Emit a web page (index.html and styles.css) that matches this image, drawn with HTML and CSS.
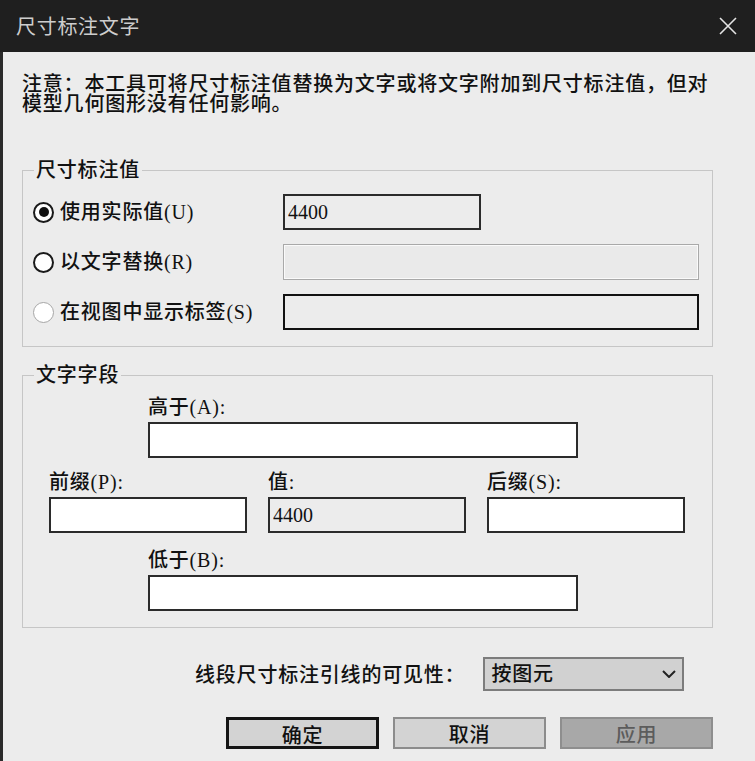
FILE: index.html
```html
<!DOCTYPE html>
<html lang="zh-CN">
<head>
  <meta charset="UTF-8">
  <meta name="viewport" content="width=device-width, initial-scale=1.0">
  <title>尺寸标注文字</title>
  <link rel="stylesheet" href="styles.css">
</head>
<body>
  <div class="dialog">
    <div class="titlebar">
      <span class="title">尺寸标注文字</span>
      <svg class="close" width="18" height="18" viewBox="0 0 18 18">
        <path d="M1 1L17 17M17 1L1 17" stroke="#e4e4e4" stroke-width="1.6" fill="none"/>
      </svg>
    </div>

    <div class="content">
      <p class="note">注意：本工具可将尺寸标注值替换为文字或将文字附加到尺寸标注值，但对模型几何图形没有任何影响。</p>

      <fieldset class="group">
        <legend>尺寸标注值</legend>
        <div class="value-rows">
          <label class="radio checked"><span class="dot"></span>使用实际值(U)</label>
          <input class="field readonly short" type="text" value="4400" readonly>
          <label class="radio"><span class="dot"></span>以文字替换(R)</label>
          <input class="field sunken long" type="text" readonly>
          <label class="radio disabled"><span class="dot"></span>在视图中显示标签(S)</label>
          <input class="field readonly dark long" type="text" readonly>
        </div>
      </fieldset>

      <fieldset class="group text-group">
        <legend>文字字段</legend>
        <div class="text-fields">
          <div class="wide above">
            <div class="lbl">高于(A):</div>
            <input class="field" type="text">
          </div>
          <div class="triple">
            <div>
              <div class="lbl">前缀(P):</div>
              <input class="field" type="text">
            </div>
            <div>
              <div class="lbl">值:</div>
              <input class="field readonly" type="text" value="4400" readonly>
            </div>
            <div>
              <div class="lbl">后缀(S):</div>
              <input class="field" type="text">
            </div>
          </div>
          <div class="wide below">
            <div class="lbl">低于(B):</div>
            <input class="field" type="text">
          </div>
        </div>
      </fieldset>

      <div class="visibility">
        <span class="vis-label">线段尺寸标注引线的可见性：</span>
        <div class="select">
          <span>按图元</span>
          <svg width="14" height="8" viewBox="0 0 14 8">
            <path d="M1 1L7 7L13 1" stroke="#222" stroke-width="2" fill="none"/>
          </svg>
        </div>
      </div>

      <div class="buttons">
        <button class="btn default">确定</button>
        <button class="btn">取消</button>
        <button class="btn disabled">应用</button>
      </div>
    </div>
  </div>
</body>
</html>
```

FILE: styles.css
```css
html, body {
  margin: 0;
  padding: 0;
  background: #ececec;
}
body {
  font-family: "Liberation Serif", "Noto Sans CJK SC", serif;
  font-size: 20px;
  font-weight: 500;
  line-height: 20px;
  letter-spacing: 0.8px;
  color: #111;
}
.dialog {
  width: 755px;
  height: 761px;
  overflow: hidden;
}
.titlebar {
  height: 52px;
  background: #1f1f1f;
  display: flex;
  align-items: center;
  justify-content: space-between;
  padding: 0 18px 0 16px;
  box-sizing: border-box;
}
.title {
  font-family: "Noto Sans CJK SC", sans-serif;
  font-weight: 400;
  color: #cdcdcd;
  font-size: 20px;
  letter-spacing: 0.7px;
}
.content {
  height: 709px;
  box-sizing: border-box;
  border-left: 3px solid #2a2a2a;
  padding: 22px 42px 0 19px;
}
.note {
  margin: 0;
  line-height: 20px;
}

/* group boxes */
.group {
  margin: 46px 0 0;
  padding: 0;
  border: 1px solid #c6c6c6;
  min-width: 0;
}
.group legend {
  margin-left: 11px;
  padding: 0 2px;
  line-height: 20px;
}
.text-group {
  margin-top: 18px;
}

.value-rows {
  display: grid;
  grid-template-columns: 250px auto;
  row-gap: 14px;
  align-items: center;
  padding: 14px 13px 16px 10px;
}
.radio {
  display: flex;
  align-items: center;
  gap: 6px;
}
.dot {
  width: 21px;
  height: 21px;
  box-sizing: border-box;
  border: 2px solid #1a1a1a;
  border-radius: 50%;
  background: #fff;
  display: flex;
  align-items: center;
  justify-content: center;
}
.radio.checked .dot::after {
  content: "";
  width: 10px;
  height: 10px;
  border-radius: 50%;
  background: #111;
}
.radio.disabled .dot {
  border: 1px solid #a6a6a6;
}

.field {
  display: block;
  box-sizing: border-box;
  width: 100%;
  height: 36px;
  margin: 0;
  padding: 0 3px;
  border: 2px solid #2b2b2b;
  border-radius: 0;
  background: #fff;
  font: inherit;
  letter-spacing: 0;
  color: #111;
  outline: none;
}
.field.readonly {
  background: #ececec;
}
.field.short {
  width: 198px;
}
.field.long {
  width: 416px;
}
.field.sunken {
  border: 1px solid #a9a9a9;
  box-shadow: inset 0 0 0 1px #fafafa;
  background: #eaeaea;
}
.field.dark {
  border-color: #111;
}

.text-fields {
  padding: 12px 0 16px 26px;
}
.lbl {
  margin-bottom: 5px;
}
.wide {
  width: 430px;
  margin-left: 99px;
}
.triple {
  display: grid;
  grid-template-columns: repeat(3, 198px);
  column-gap: 21px;
  margin-top: 14px;
}
.below {
  margin-top: 17px;
}

/* bottom controls */
.visibility {
  display: flex;
  align-items: center;
  gap: 18px;
  margin-top: 29px;
  padding-left: 173px;
}
.vis-label {
  font-family: "Noto Sans CJK SC", sans-serif;
}
.select {
  width: 201px;
  height: 34px;
  box-sizing: border-box;
  border: 2px solid #7c7c7c;
  background: #d1d1d1;
  padding: 0 6px;
  display: flex;
  align-items: center;
  justify-content: space-between;
}
.buttons {
  display: flex;
  gap: 14px;
  margin-top: 26px;
  padding-left: 204px;
}
.btn {
  width: 153px;
  height: 32px;
  box-sizing: border-box;
  margin: 0;
  padding: 0;
  border: 2px solid #8c8c8c;
  border-radius: 0;
  background: #d3d3d3;
  font-family: "Noto Sans CJK SC", sans-serif;
  font-size: 20px;
  font-weight: 500;
  letter-spacing: 0.8px;
  color: #111;
}
.btn.default {
  border: 3px solid #141414;
}
.btn.disabled {
  background: #a8a8a8;
  border-color: #8e8e8e;
  color: #5c5c5c;
}
```
